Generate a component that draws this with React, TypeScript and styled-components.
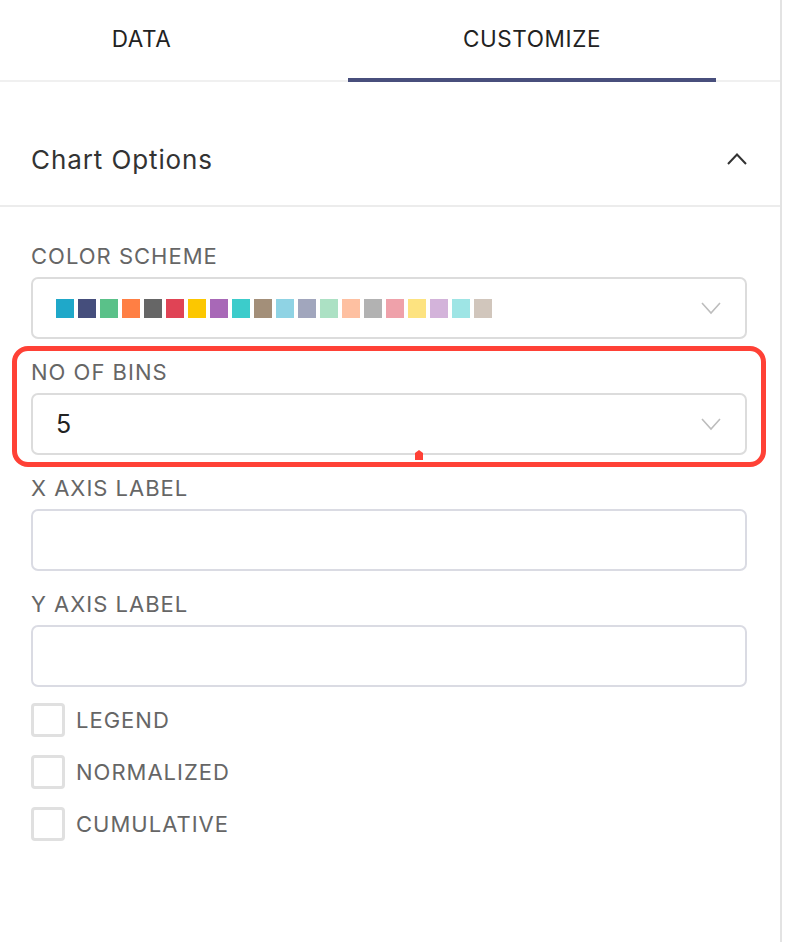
import styled, { createGlobalStyle } from 'styled-components';

const GlobalStyle = createGlobalStyle`
  body {
    margin: 0;
    background: #fff;
    font-family: Inter, "Noto Sans", "Liberation Sans", sans-serif;
  }
`;

const COLORS = [
  '#1FA8C9', '#454E7C', '#5AC189', '#FF7F44', '#666666',
  '#E04355', '#FCC700', '#A868B7', '#3CCCCB', '#A38F79',
  '#8FD3E4', '#A1A6BD', '#ACE1C4', '#FEC0A1', '#B2B2B2',
  '#EFA1AA', '#FDE380', '#D3B3DA', '#9EE5E5', '#D1C6BC',
];

const Panel = styled.div`
  width: 780px;
  min-height: 942px;
  border-right: 2px solid #e3e3e3;
  box-sizing: content-box;
`;

const TabBar = styled.div`
  display: flex;
  height: 82px;
  border-bottom: 2px solid #f0f0f0;
  box-sizing: border-box;
`;

const Tab = styled.div<{ active?: boolean; width: number; offset?: number }>`
  display: flex;
  align-items: center;
  justify-content: center;
  width: ${({ width }) => width}px;
  margin-left: ${({ offset }) => offset || 0}px;
  margin-bottom: -2px;
  padding-bottom: 1px;
  box-sizing: border-box;
  font-size: 22.5px;
  color: #222;
  letter-spacing: 0.6px;
  border-bottom: 4px solid ${({ active }) => (active ? '#484f7c' : 'transparent')};
`;

const SectionHeader = styled.div`
  display: flex;
  align-items: center;
  justify-content: space-between;
  height: 92px;
  margin-top: 31px;
  padding: 0 33px 0 31px;
  border-bottom: 2px solid #ececec;
  font-size: 26px;
  letter-spacing: 0.9px;
  color: #333;
`;

const Form = styled.div`
  display: flex;
  flex-direction: column;
  padding: 35px 33px 0 31px;
`;

const Field = styled.div`
  position: relative;
  display: flex;
  flex-direction: column;
  gap: 7px;
  margin-bottom: 19px;
`;

const Label = styled.div`
  height: 28px;
  line-height: 28px;
  font-size: 22px;
  letter-spacing: 1px;
  color: #666;
`;

const Select = styled.div`
  display: flex;
  align-items: center;
  justify-content: space-between;
  height: 62px;
  padding: 0 24px 0 23px;
  box-sizing: border-box;
  border: 2px solid #dcdcdc;
  border-radius: 7px;
  font-size: 25px;
  color: #222;
`;

const Input = styled.div`
  height: 62px;
  box-sizing: border-box;
  border: 2px solid #dadbe3;
  border-radius: 7px;
`;

const Swatches = styled.div`
  display: flex;
  gap: 4px;
`;

const Swatch = styled.span<{ color: string }>`
  width: 18px;
  height: 19px;
  background: ${({ color }) => color};
`;

const Highlight = styled.div`
  position: absolute;
  inset: -12px -19px -12px -19px;
  border: 5px solid #ff4136;
  border-radius: 16px;
  pointer-events: none;

  svg {
    position: absolute;
    left: 398px;
    bottom: 2px;
  }
`;

const CheckRow = styled.label`
  display: flex;
  align-items: center;
  gap: 11px;
  height: 34px;
  margin-top: -3px;
  margin-bottom: 21px;
  font-size: 22px;
  letter-spacing: 1px;
  color: #666;
`;

const Box = styled.span`
  width: 34px;
  height: 34px;
  box-sizing: border-box;
  border: 3px solid #e0e0e0;
  border-radius: 4px;
`;

function ChevronDown() {
  return (
    <svg width="20" height="14" viewBox="0 0 20 14" fill="none">
      <path d="M1 2l9 10 9-10" stroke="#bdbdbd" strokeWidth="1.6" />
    </svg>
  );
}

function ChevronUp() {
  return (
    <svg width="20" height="12" viewBox="0 0 20 12" fill="none">
      <path d="M1 11l9-9.5 9 9.5" stroke="#333" strokeWidth="2" />
    </svg>
  );
}

export default function App() {
  return (
    <>
      <GlobalStyle />
      <Panel>
        <TabBar>
          <Tab width={283}>DATA</Tab>
          <Tab width={368} offset={65} active>
            CUSTOMIZE
          </Tab>
        </TabBar>

        <SectionHeader>
          <span>Chart Options</span>
          <ChevronUp />
        </SectionHeader>

        <Form>
          <Field>
            <Label>COLOR SCHEME</Label>
            <Select>
              <Swatches>
                {COLORS.map((c) => (
                  <Swatch key={c} color={c} />
                ))}
              </Swatches>
              <ChevronDown />
            </Select>
          </Field>

          <Field>
            <Label>NO OF BINS</Label>
            <Select>
              <span>5</span>
              <ChevronDown />
            </Select>
            <Highlight>
              <svg width="8" height="10" viewBox="0 0 8 10">
                <path d="M0 3L4 0l4 3v7H0z" fill="#ff4136" />
              </svg>
            </Highlight>
          </Field>

          <Field>
            <Label>X AXIS LABEL</Label>
            <Input />
          </Field>

          <Field>
            <Label>Y AXIS LABEL</Label>
            <Input />
          </Field>

          <CheckRow>
            <Box />
            LEGEND
          </CheckRow>
          <CheckRow>
            <Box />
            NORMALIZED
          </CheckRow>
          <CheckRow>
            <Box />
            CUMULATIVE
          </CheckRow>
        </Form>
      </Panel>
    </>
  );
}
